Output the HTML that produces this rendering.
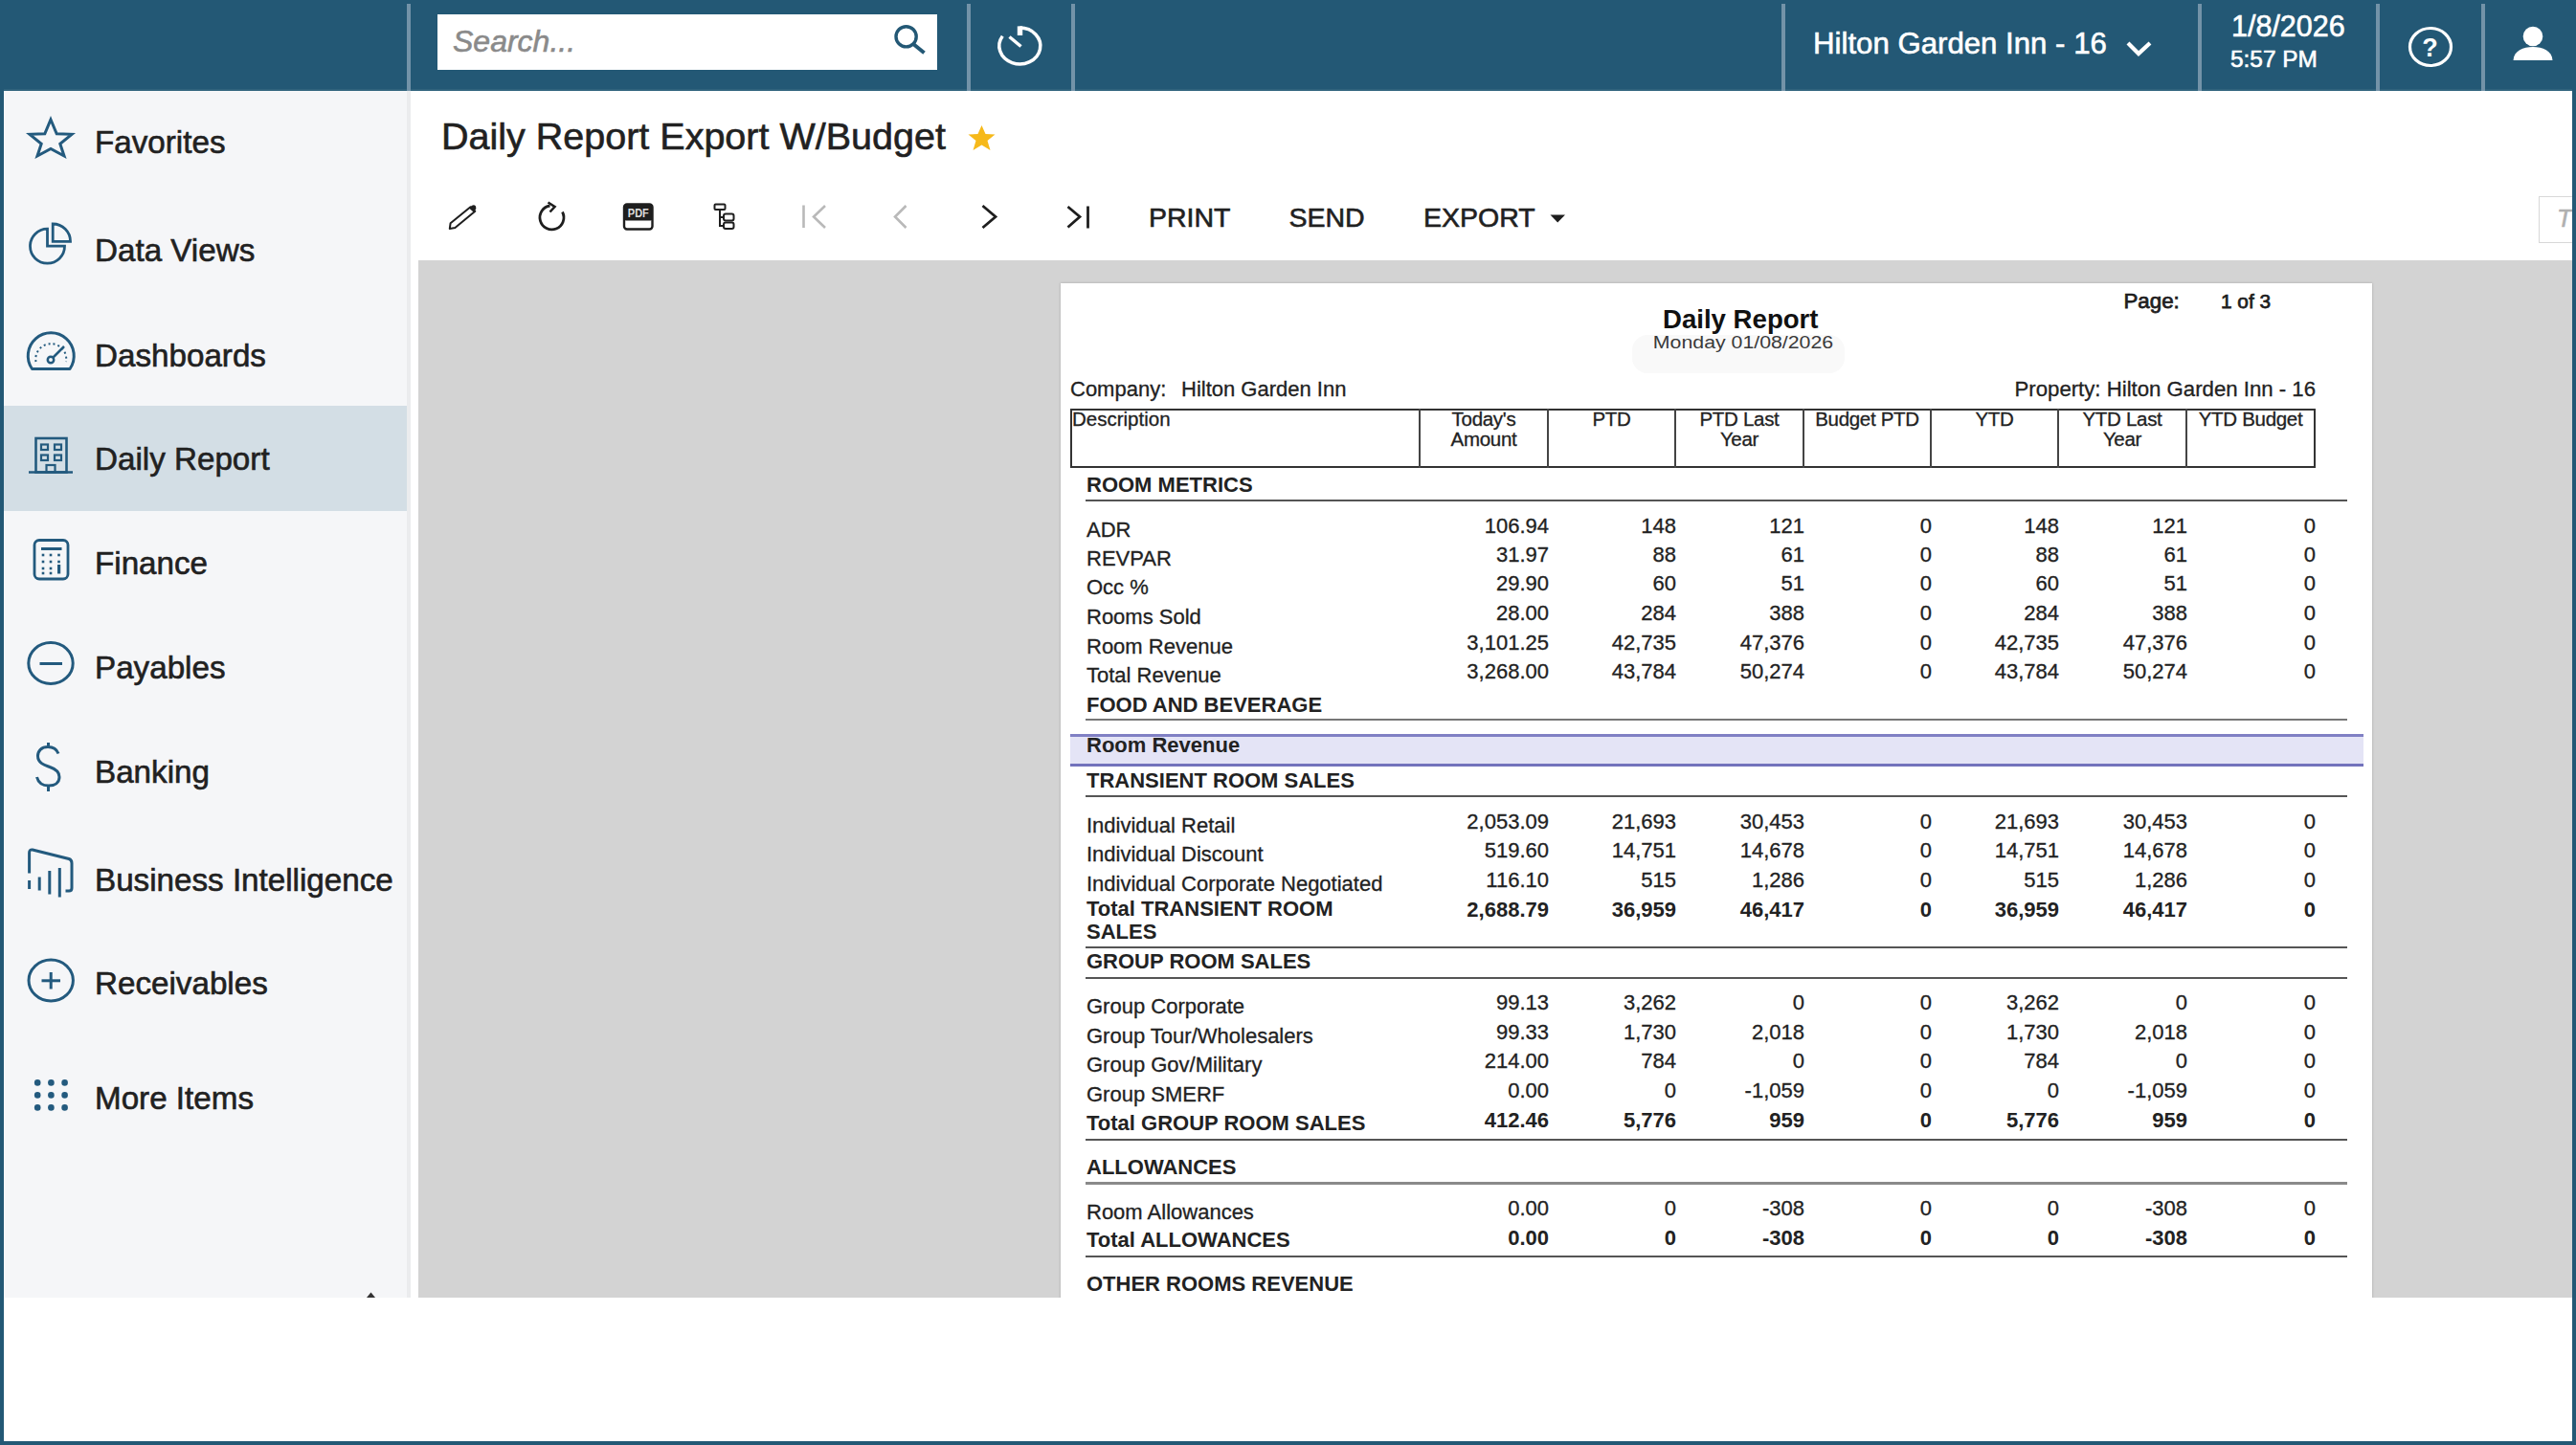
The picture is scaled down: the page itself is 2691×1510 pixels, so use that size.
<!DOCTYPE html>
<html><head><meta charset="utf-8"><title>Daily Report Export W/Budget</title>
<style>
html,body{margin:0;padding:0;}
body{width:2691px;height:1510px;position:relative;overflow:hidden;background:#235875;font-family:"Liberation Sans",sans-serif;}
.t{position:absolute;line-height:1;white-space:nowrap;-webkit-text-stroke:0.6px currentColor;}
.b{-webkit-text-stroke:0;}
.rp{-webkit-text-stroke:0.3px currentColor;}
.ns{-webkit-text-stroke:0;}
.r{position:absolute;}
svg{position:absolute;overflow:visible;}
</style></head><body>
<div class="r" style="left:4px;top:95px;width:2683px;height:1411px;background:#ffffff;"></div>
<div class="r" style="left:4px;top:93px;width:2683px;height:2px;background:#30637d;"></div>
<div class="r" style="left:4px;top:95px;width:421px;height:1261px;background:#f5f6f8;"></div>
<div class="r" style="left:425px;top:95px;width:4px;height:1261px;background:#ebecee;"></div>
<div class="r" style="left:4px;top:424px;width:421px;height:110px;background:#d3dee5;"></div>
<div class="r" style="left:437px;top:272px;width:2250px;height:1084px;background:#d3d3d3;"></div>
<div class="r" style="left:1108px;top:296px;width:1370px;height:1100px;background:#ffffff;box-shadow:0 0 2.5px rgba(0,0,0,0.22);"></div>
<div class="r" style="left:425px;top:4px;width:4px;height:91px;background:#7393a8;"></div>
<div class="r" style="left:1010px;top:4px;width:4px;height:91px;background:#7393a8;"></div>
<div class="r" style="left:1119px;top:4px;width:4px;height:91px;background:#7393a8;"></div>
<div class="r" style="left:1861px;top:4px;width:4px;height:91px;background:#7393a8;"></div>
<div class="r" style="left:2296px;top:4px;width:4px;height:91px;background:#7393a8;"></div>
<div class="r" style="left:2482px;top:4px;width:4px;height:91px;background:#7393a8;"></div>
<div class="r" style="left:2592px;top:4px;width:4px;height:91px;background:#7393a8;"></div>
<div class="r" style="left:457px;top:15px;width:522px;height:58px;background:#ffffff;"></div>
<div class="t" style="left:473.0px;top:26.9px;font-size:32px;color:#8a8a8a;font-style:italic;">Search...</div>
<svg style="left:0;top:0" width="1200" height="94"><circle cx="946.6" cy="38.3" r="10.6" fill="none" stroke="#235875" stroke-width="3.4"/><line x1="953.8" y1="45.8" x2="965.5" y2="55.2" stroke="#235875" stroke-width="4"/><path d="M 1047.3 37.7 A 21.5 18.9 0 1 0 1065.3 29.1" fill="none" stroke="#fff" stroke-width="3.5"/><rect x="1062.8" y="27.4" width="5.4" height="9.6" fill="#fff"/><line x1="1054.5" y1="38.5" x2="1066.5" y2="48.5" stroke="#fff" stroke-width="3.5"/></svg>
<div class="t" style="left:1894.0px;top:29.6px;font-size:31.2px;color:#ffffff;">Hilton Garden Inn - 16</div>
<svg style="left:2220px;top:42px" width="30" height="18" viewBox="0 0 30 18"><polyline points="3,3 14,14 26,3" fill="none" stroke="#fff" stroke-width="4.2"/></svg>
<div class="t" style="left:2331.0px;top:12.2px;font-size:30.5px;color:#ffffff;">1/8/2026</div>
<div class="t" style="left:2330.0px;top:50.3px;font-size:24.4px;color:#ffffff;">5:57 PM</div>
<svg style="left:2514px;top:27px" width="50" height="44" viewBox="0 0 50 44"><ellipse cx="25" cy="22" rx="21.5" ry="19.5" fill="none" stroke="#fff" stroke-width="3.2"/></svg>
<div class="t b" style="left:2523.5px;width:30px;text-align:center;top:36.6px;font-size:27px;color:#ffffff;font-weight:700;">?</div>
<svg style="left:2624px;top:26px" width="44" height="40" viewBox="0 0 44 40"><ellipse cx="22" cy="12" rx="10.3" ry="10.3" fill="#fff"/><path d="M1.5 37 C 2 27, 12 23, 22 23 C 32 23, 42 27, 42.5 37 Z" fill="#fff"/></svg>
<div class="t" style="left:99.0px;top:131.9px;font-size:33.2px;color:#212121;">Favorites</div>
<div class="t" style="left:99.0px;top:245.4px;font-size:33.2px;color:#212121;">Data Views</div>
<div class="t" style="left:99.0px;top:354.9px;font-size:33.2px;color:#212121;">Dashboards</div>
<div class="t" style="left:99.0px;top:463.4px;font-size:33.2px;color:#212121;">Daily Report</div>
<div class="t" style="left:99.0px;top:571.9px;font-size:33.2px;color:#212121;">Finance</div>
<div class="t" style="left:99.0px;top:681.4px;font-size:33.2px;color:#212121;">Payables</div>
<div class="t" style="left:99.0px;top:789.9px;font-size:33.2px;color:#212121;">Banking</div>
<div class="t" style="left:99.0px;top:902.9px;font-size:33.2px;color:#212121;">Business Intelligence</div>
<div class="t" style="left:99.0px;top:1010.9px;font-size:33.2px;color:#212121;">Receivables</div>
<div class="t" style="left:99.0px;top:1130.9px;font-size:33.2px;color:#212121;">More Items</div>
<svg style="left:0;top:0" width="100" height="1200"><polygon points="53,125 59.2,139.8 75,140.3 62.8,150.3 67,163 53,155.5 39,163 43.2,150.3 31,140.3 46.8,139.8" fill="none" stroke="#235a7e" stroke-width="3" stroke-linejoin="miter"/><path d="M 49.5 239.2 A 18 18 0 1 0 67.5 257.2 L 49.5 257.2 Z" fill="none" stroke="#235a7e" stroke-width="2.8"/><path d="M 55.2 234 A 18.3 18.3 0 0 1 73.5 252.3 L 55.2 252.3 Z" fill="none" stroke="#235a7e" stroke-width="2.8"/><path d="M 33.5 385.5 A 24 24 0 1 1 73 385.5 Z" fill="none" stroke="#235a7e" stroke-width="3" stroke-linejoin="round"/><path d="M 37.5 378 A 16 16 0 1 1 69 378" fill="none" stroke="#235a7e" stroke-width="2" stroke-dasharray="2 3"/><circle cx="53" cy="376" r="3.2" fill="none" stroke="#235a7e" stroke-width="2.5"/><line x1="55" y1="374" x2="67" y2="362" stroke="#235a7e" stroke-width="2.5"/><rect x="37.5" y="458" width="32" height="35.5" fill="none" stroke="#235a7e" stroke-width="2.6"/><line x1="30" y1="493.5" x2="76" y2="493.5" stroke="#235a7e" stroke-width="2.6"/><rect x="43" y="464.5" width="7" height="5.5" fill="none" stroke="#235a7e" stroke-width="2.2"/><rect x="57" y="464.5" width="7" height="5.5" fill="none" stroke="#235a7e" stroke-width="2.2"/><rect x="43" y="475.5" width="7" height="5.5" fill="none" stroke="#235a7e" stroke-width="2.2"/><rect x="57" y="475.5" width="7" height="5.5" fill="none" stroke="#235a7e" stroke-width="2.2"/><rect x="48.5" y="486" width="9" height="7.5" fill="none" stroke="#235a7e" stroke-width="2.2"/><rect x="36" y="564.5" width="35" height="40.5" rx="5" fill="none" stroke="#235a7e" stroke-width="2.8"/><line x1="43" y1="573.5" x2="64.5" y2="573.5" stroke="#235a7e" stroke-width="3"/><rect x="43.7" y="578.7" width="2.6" height="2.6" fill="#235a7e"/><rect x="43.7" y="585.7" width="2.6" height="2.6" fill="#235a7e"/><rect x="43.7" y="592.7" width="2.6" height="2.6" fill="#235a7e"/><rect x="43.7" y="597.7" width="2.6" height="2.6" fill="#235a7e"/><rect x="51.7" y="578.7" width="2.6" height="2.6" fill="#235a7e"/><rect x="51.7" y="585.7" width="2.6" height="2.6" fill="#235a7e"/><rect x="51.7" y="592.7" width="2.6" height="2.6" fill="#235a7e"/><rect x="51.7" y="597.7" width="2.6" height="2.6" fill="#235a7e"/><rect x="60.2" y="578.7" width="2.6" height="2.6" fill="#235a7e"/><rect x="60.2" y="585.7" width="2.6" height="2.6" fill="#235a7e"/><rect x="60" y="590" width="3.2" height="9.5" fill="#235a7e"/><ellipse cx="53" cy="693" rx="23.2" ry="21.5" fill="none" stroke="#235a7e" stroke-width="3"/><line x1="41.5" y1="693.5" x2="65" y2="693.5" stroke="#235a7e" stroke-width="3"/><path d="M 30.6 912.5 L 30.6 891 Q 30.6 887.5 34 888 L 72 897.5 Q 75 898.5 75 902 L 75 928 Q 75 931 72 931 L 68.5 931" fill="none" stroke="#235a7e" stroke-width="3"/><line x1="30.6" y1="920" x2="30.6" y2="929" stroke="#235a7e" stroke-width="3"/><line x1="41.2" y1="916.5" x2="41.2" y2="930.5" stroke="#235a7e" stroke-width="3"/><line x1="51.8" y1="910" x2="51.8" y2="934.5" stroke="#235a7e" stroke-width="3"/><line x1="62.3" y1="907" x2="62.3" y2="937.5" stroke="#235a7e" stroke-width="3"/><ellipse cx="53.2" cy="1024.5" rx="23.2" ry="21.5" fill="none" stroke="#235a7e" stroke-width="3"/><line x1="43.5" y1="1024.8" x2="63" y2="1024.8" stroke="#235a7e" stroke-width="3"/><line x1="53.2" y1="1016" x2="53.2" y2="1033.5" stroke="#235a7e" stroke-width="3"/><circle cx="39.2" cy="1131.4" r="3.3" fill="#235a7e"/><circle cx="39.2" cy="1144.4" r="3.3" fill="#235a7e"/><circle cx="39.2" cy="1157.4" r="3.3" fill="#235a7e"/><circle cx="53.4" cy="1131.4" r="3.3" fill="#235a7e"/><circle cx="53.4" cy="1144.4" r="3.3" fill="#235a7e"/><circle cx="53.4" cy="1157.4" r="3.3" fill="#235a7e"/><circle cx="67.6" cy="1131.4" r="3.3" fill="#235a7e"/><circle cx="67.6" cy="1144.4" r="3.3" fill="#235a7e"/><circle cx="67.6" cy="1157.4" r="3.3" fill="#235a7e"/></svg>
<svg style="left:0;top:0" width="100" height="900"><path d="M 61 787.5 C 59 782, 54 780.5, 50 780.5 C 43 780.5, 39.5 785, 39.5 790 C 39.5 798, 48 800, 52 801.5 C 58 803.5, 62 806, 62 812 C 62 818, 57 821, 51 821 C 45 821, 40 818, 38.5 812" fill="none" stroke="#235a7e" stroke-width="3"/><line x1="50.5" y1="776" x2="50.5" y2="781" stroke="#235a7e" stroke-width="3"/><line x1="50.5" y1="821" x2="50.5" y2="827" stroke="#235a7e" stroke-width="3"/></svg>
<div class="t" style="left:461.0px;top:122.6px;font-size:39.5px;color:#212121;">Daily Report Export W/Budget</div>
<svg style="left:1010px;top:130px" width="32" height="28" viewBox="0 0 32 28"><polygon points="15.5,1 19.5,10 29.5,10.5 21.5,17 24.5,27 15.5,21.5 6.5,27 9.5,17 1.5,10.5 11.5,10" fill="#f6b91a"/></svg>
<svg style="left:0;top:0" width="1700" height="300"><path d="M 469.8 239 L 470.6 233.2 L 491.5 216.2 L 496.3 220.8 L 475.4 238 Z" fill="none" stroke="#1e1e1e" stroke-width="2" stroke-linejoin="round"/><path d="M 490 217.5 L 493 214.8 Q 495.5 213.5 497 215.5 Q 498 217.8 496.3 219.5 L 494.5 221.5 Z" fill="#1e1e1e"/><path d="M 574.5 215 A 12.5 12.5 0 1 0 587.5 221.5" fill="none" stroke="#1e1e1e" stroke-width="2.8"/><polyline points="572.5,211.5 579.5,216 574.5,221.5" fill="none" stroke="#1e1e1e" stroke-width="2.6"/><rect x="652" y="213.5" width="29.5" height="26" rx="3" fill="none" stroke="#1e1e1e" stroke-width="2.4"/><rect x="652" y="213.5" width="29.5" height="17" rx="2" fill="#1e1e1e"/><text x="666.8" y="227" font-family="Liberation Sans" font-size="12" font-weight="700" fill="#ddd" text-anchor="middle" textLength="22" lengthAdjust="spacingAndGlyphs">PDF</text><rect x="746.5" y="213.5" width="11" height="5.5" rx="1" fill="none" stroke="#1e1e1e" stroke-width="2"/><path d="M 752 219 L 752 236 L 756 236 M 752 227 L 756 227" fill="none" stroke="#1e1e1e" stroke-width="2"/><rect x="756" y="223.5" width="10.5" height="7" rx="2" fill="none" stroke="#1e1e1e" stroke-width="2"/><rect x="756" y="232.5" width="10.5" height="6.5" rx="2" fill="none" stroke="#1e1e1e" stroke-width="2"/><path d="M 839.5 214.5 L 839.5 238" stroke="#b9b9b9" stroke-width="2.6"/><polyline points="862,215 850,226.5 862,238" fill="none" stroke="#b9b9b9" stroke-width="2.6"/><polyline points="946.5,215 935,226.5 946.5,238" fill="none" stroke="#b9b9b9" stroke-width="2.6"/><polyline points="1026.5,215 1040,226.5 1026.5,238" fill="none" stroke="#1e1e1e" stroke-width="2.8"/><polyline points="1115.5,216 1128,226.5 1115.5,237.5" fill="none" stroke="#1e1e1e" stroke-width="2.8"/><line x1="1136.5" y1="215.5" x2="1136.5" y2="238.5" stroke="#1e1e1e" stroke-width="2.8"/><polygon points="1619.5,224.5 1635,224.5 1627.2,232.5" fill="#1e1e1e"/></svg>
<div class="t" style="left:1200.0px;top:212.9px;font-size:28.5px;color:#212121;">PRINT</div>
<div class="t" style="left:1346.5px;top:212.9px;font-size:28.5px;color:#212121;">SEND</div>
<div class="t" style="left:1487.0px;top:212.9px;font-size:28.5px;color:#212121;">EXPORT</div>
<div class="r" style="left:2652px;top:205px;width:35px;height:49px;background:#ffffff;border:1.5px solid #d8d8d8;border-right:0;box-sizing:border-box;overflow:hidden;"></div>
<div class="t" style="left:2671.0px;top:215.0px;font-size:26px;color:#b0b0b0;font-style:italic;">T</div>
<div class="r" style="left:2687px;top:94px;width:4px;height:1416px;background:#235875;"></div>
<div class="t b" style="left:1737.0px;top:319.6px;font-size:27.6px;color:#111;font-weight:700;">Daily Report</div>
<div class="r" style="left:1705px;top:350px;width:222px;height:40px;background:#f9f9f9;border-radius:16px;"></div>
<div class="t" style="left:1691.0px;width:260px;text-align:center;top:348.4px;font-size:19.2px;color:#3a3a3a;transform:scaleX(1.11);-webkit-text-stroke:0;">Monday 01/08/2026</div>
<div class="t" style="left:2218.5px;top:304.1px;font-size:22.3px;color:#1e1e1e;-webkit-text-stroke:0.75px #1e1e1e;">Page:</div>
<div class="t" style="left:2320.0px;top:305.4px;font-size:20.8px;color:#1e1e1e;-webkit-text-stroke:0.75px #1e1e1e;">1 of 3</div>
<div class="t rp" style="left:1118.0px;top:395.9px;font-size:22px;color:#222222;">Company:</div>
<div class="t rp" style="left:1234.0px;top:395.9px;font-size:22px;color:#222222;">Hilton Garden Inn</div>
<div class="t rp" style="left:2019.0px;width:400px;text-align:right;top:395.5px;font-size:22.2px;color:#222222;">Property: Hilton Garden Inn - 16</div>
<div class="r" style="left:1118px;top:427px;width:1301px;height:62px;background:transparent;border:2px solid #333;box-sizing:border-box;"></div>
<div class="r" style="left:1482px;top:427px;width:2px;height:62px;background:#444;"></div>
<div class="r" style="left:1616px;top:427px;width:2px;height:62px;background:#444;"></div>
<div class="r" style="left:1749px;top:427px;width:2px;height:62px;background:#444;"></div>
<div class="r" style="left:1883px;top:427px;width:2px;height:62px;background:#444;"></div>
<div class="r" style="left:2016px;top:427px;width:2px;height:62px;background:#444;"></div>
<div class="r" style="left:2149px;top:427px;width:2px;height:62px;background:#444;"></div>
<div class="r" style="left:2283px;top:427px;width:2px;height:62px;background:#444;"></div>
<div class="t rp" style="left:1120.0px;top:427.9px;font-size:20.5px;color:#222222;">Description</div>
<div class="t rp" style="left:1483.0px;width:134px;text-align:center;top:427.9px;font-size:20.5px;color:#222222;letter-spacing:-0.3px;">Today's</div>
<div class="t rp" style="left:1483.0px;width:134px;text-align:center;top:449.1px;font-size:20.5px;color:#222222;letter-spacing:-0.3px;">Amount</div>
<div class="t rp" style="left:1616.5px;width:134px;text-align:center;top:427.9px;font-size:20.5px;color:#222222;letter-spacing:-0.3px;">PTD</div>
<div class="t rp" style="left:1750.0px;width:134px;text-align:center;top:427.9px;font-size:20.5px;color:#222222;letter-spacing:-0.3px;">PTD Last</div>
<div class="t rp" style="left:1750.0px;width:134px;text-align:center;top:449.1px;font-size:20.5px;color:#222222;letter-spacing:-0.3px;">Year</div>
<div class="t rp" style="left:1883.5px;width:134px;text-align:center;top:427.9px;font-size:20.5px;color:#222222;letter-spacing:-0.3px;">Budget PTD</div>
<div class="t rp" style="left:2016.5px;width:134px;text-align:center;top:427.9px;font-size:20.5px;color:#222222;letter-spacing:-0.3px;">YTD</div>
<div class="t rp" style="left:2150.0px;width:134px;text-align:center;top:427.9px;font-size:20.5px;color:#222222;letter-spacing:-0.3px;">YTD Last</div>
<div class="t rp" style="left:2150.0px;width:134px;text-align:center;top:449.1px;font-size:20.5px;color:#222222;letter-spacing:-0.3px;">Year</div>
<div class="t rp" style="left:2284.0px;width:134px;text-align:center;top:427.9px;font-size:20.5px;color:#222222;letter-spacing:-0.3px;">YTD Budget</div>
<div class="t b" style="left:1135.0px;top:496.4px;font-size:22px;color:#222222;font-weight:700;">ROOM METRICS</div>
<div class="r" style="left:1134px;top:522px;width:1318px;height:2px;background:#555;"></div>
<div class="t rp" style="left:1135.0px;top:542.8px;font-size:22px;color:#222222;">ADR</div>
<div class="t rp" style="left:1488.0px;width:130px;text-align:right;top:538.8px;font-size:22px;color:#222222;">106.94</div>
<div class="t rp" style="left:1621.0px;width:130px;text-align:right;top:538.8px;font-size:22px;color:#222222;">148</div>
<div class="t rp" style="left:1755.0px;width:130px;text-align:right;top:538.8px;font-size:22px;color:#222222;">121</div>
<div class="t rp" style="left:1888.0px;width:130px;text-align:right;top:538.8px;font-size:22px;color:#222222;">0</div>
<div class="t rp" style="left:2021.0px;width:130px;text-align:right;top:538.8px;font-size:22px;color:#222222;">148</div>
<div class="t rp" style="left:2155.0px;width:130px;text-align:right;top:538.8px;font-size:22px;color:#222222;">121</div>
<div class="t rp" style="left:2289.0px;width:130px;text-align:right;top:538.8px;font-size:22px;color:#222222;">0</div>
<div class="t rp" style="left:1135.0px;top:573.4px;font-size:22px;color:#222222;">REVPAR</div>
<div class="t rp" style="left:1488.0px;width:130px;text-align:right;top:569.4px;font-size:22px;color:#222222;">31.97</div>
<div class="t rp" style="left:1621.0px;width:130px;text-align:right;top:569.4px;font-size:22px;color:#222222;">88</div>
<div class="t rp" style="left:1755.0px;width:130px;text-align:right;top:569.4px;font-size:22px;color:#222222;">61</div>
<div class="t rp" style="left:1888.0px;width:130px;text-align:right;top:569.4px;font-size:22px;color:#222222;">0</div>
<div class="t rp" style="left:2021.0px;width:130px;text-align:right;top:569.4px;font-size:22px;color:#222222;">88</div>
<div class="t rp" style="left:2155.0px;width:130px;text-align:right;top:569.4px;font-size:22px;color:#222222;">61</div>
<div class="t rp" style="left:2289.0px;width:130px;text-align:right;top:569.4px;font-size:22px;color:#222222;">0</div>
<div class="t rp" style="left:1135.0px;top:603.4px;font-size:22px;color:#222222;">Occ %</div>
<div class="t rp" style="left:1488.0px;width:130px;text-align:right;top:599.4px;font-size:22px;color:#222222;">29.90</div>
<div class="t rp" style="left:1621.0px;width:130px;text-align:right;top:599.4px;font-size:22px;color:#222222;">60</div>
<div class="t rp" style="left:1755.0px;width:130px;text-align:right;top:599.4px;font-size:22px;color:#222222;">51</div>
<div class="t rp" style="left:1888.0px;width:130px;text-align:right;top:599.4px;font-size:22px;color:#222222;">0</div>
<div class="t rp" style="left:2021.0px;width:130px;text-align:right;top:599.4px;font-size:22px;color:#222222;">60</div>
<div class="t rp" style="left:2155.0px;width:130px;text-align:right;top:599.4px;font-size:22px;color:#222222;">51</div>
<div class="t rp" style="left:2289.0px;width:130px;text-align:right;top:599.4px;font-size:22px;color:#222222;">0</div>
<div class="t rp" style="left:1135.0px;top:634.4px;font-size:22px;color:#222222;">Rooms Sold</div>
<div class="t rp" style="left:1488.0px;width:130px;text-align:right;top:630.4px;font-size:22px;color:#222222;">28.00</div>
<div class="t rp" style="left:1621.0px;width:130px;text-align:right;top:630.4px;font-size:22px;color:#222222;">284</div>
<div class="t rp" style="left:1755.0px;width:130px;text-align:right;top:630.4px;font-size:22px;color:#222222;">388</div>
<div class="t rp" style="left:1888.0px;width:130px;text-align:right;top:630.4px;font-size:22px;color:#222222;">0</div>
<div class="t rp" style="left:2021.0px;width:130px;text-align:right;top:630.4px;font-size:22px;color:#222222;">284</div>
<div class="t rp" style="left:2155.0px;width:130px;text-align:right;top:630.4px;font-size:22px;color:#222222;">388</div>
<div class="t rp" style="left:2289.0px;width:130px;text-align:right;top:630.4px;font-size:22px;color:#222222;">0</div>
<div class="t rp" style="left:1135.0px;top:665.4px;font-size:22px;color:#222222;">Room Revenue</div>
<div class="t rp" style="left:1488.0px;width:130px;text-align:right;top:661.4px;font-size:22px;color:#222222;">3,101.25</div>
<div class="t rp" style="left:1621.0px;width:130px;text-align:right;top:661.4px;font-size:22px;color:#222222;">42,735</div>
<div class="t rp" style="left:1755.0px;width:130px;text-align:right;top:661.4px;font-size:22px;color:#222222;">47,376</div>
<div class="t rp" style="left:1888.0px;width:130px;text-align:right;top:661.4px;font-size:22px;color:#222222;">0</div>
<div class="t rp" style="left:2021.0px;width:130px;text-align:right;top:661.4px;font-size:22px;color:#222222;">42,735</div>
<div class="t rp" style="left:2155.0px;width:130px;text-align:right;top:661.4px;font-size:22px;color:#222222;">47,376</div>
<div class="t rp" style="left:2289.0px;width:130px;text-align:right;top:661.4px;font-size:22px;color:#222222;">0</div>
<div class="t rp" style="left:1135.0px;top:695.4px;font-size:22px;color:#222222;">Total Revenue</div>
<div class="t rp" style="left:1488.0px;width:130px;text-align:right;top:691.4px;font-size:22px;color:#222222;">3,268.00</div>
<div class="t rp" style="left:1621.0px;width:130px;text-align:right;top:691.4px;font-size:22px;color:#222222;">43,784</div>
<div class="t rp" style="left:1755.0px;width:130px;text-align:right;top:691.4px;font-size:22px;color:#222222;">50,274</div>
<div class="t rp" style="left:1888.0px;width:130px;text-align:right;top:691.4px;font-size:22px;color:#222222;">0</div>
<div class="t rp" style="left:2021.0px;width:130px;text-align:right;top:691.4px;font-size:22px;color:#222222;">43,784</div>
<div class="t rp" style="left:2155.0px;width:130px;text-align:right;top:691.4px;font-size:22px;color:#222222;">50,274</div>
<div class="t rp" style="left:2289.0px;width:130px;text-align:right;top:691.4px;font-size:22px;color:#222222;">0</div>
<div class="t b" style="left:1135.0px;top:725.5px;font-size:22px;color:#222222;font-weight:700;">FOOD AND BEVERAGE</div>
<div class="r" style="left:1134px;top:751px;width:1318px;height:2px;background:#777;"></div>
<div class="r" style="left:1118px;top:766.5px;width:1351px;height:3px;background:#8080c4;"></div>
<div class="r" style="left:1118px;top:769.5px;width:1351px;height:29px;background:#e4e4f6;"></div>
<div class="r" style="left:1118px;top:798px;width:1351px;height:3px;background:#7272bc;"></div>
<div class="t b" style="left:1135.0px;top:768.4px;font-size:22px;color:#222222;font-weight:700;">Room Revenue</div>
<div class="t b" style="left:1135.0px;top:805.3px;font-size:22px;color:#222222;font-weight:700;">TRANSIENT ROOM SALES</div>
<div class="r" style="left:1134px;top:831px;width:1318px;height:2px;background:#555;"></div>
<div class="t rp" style="left:1135.0px;top:852.0px;font-size:22px;color:#222222;">Individual Retail</div>
<div class="t rp" style="left:1488.0px;width:130px;text-align:right;top:848.0px;font-size:22px;color:#222222;">2,053.09</div>
<div class="t rp" style="left:1621.0px;width:130px;text-align:right;top:848.0px;font-size:22px;color:#222222;">21,693</div>
<div class="t rp" style="left:1755.0px;width:130px;text-align:right;top:848.0px;font-size:22px;color:#222222;">30,453</div>
<div class="t rp" style="left:1888.0px;width:130px;text-align:right;top:848.0px;font-size:22px;color:#222222;">0</div>
<div class="t rp" style="left:2021.0px;width:130px;text-align:right;top:848.0px;font-size:22px;color:#222222;">21,693</div>
<div class="t rp" style="left:2155.0px;width:130px;text-align:right;top:848.0px;font-size:22px;color:#222222;">30,453</div>
<div class="t rp" style="left:2289.0px;width:130px;text-align:right;top:848.0px;font-size:22px;color:#222222;">0</div>
<div class="t rp" style="left:1135.0px;top:882.4px;font-size:22px;color:#222222;">Individual Discount</div>
<div class="t rp" style="left:1488.0px;width:130px;text-align:right;top:878.4px;font-size:22px;color:#222222;">519.60</div>
<div class="t rp" style="left:1621.0px;width:130px;text-align:right;top:878.4px;font-size:22px;color:#222222;">14,751</div>
<div class="t rp" style="left:1755.0px;width:130px;text-align:right;top:878.4px;font-size:22px;color:#222222;">14,678</div>
<div class="t rp" style="left:1888.0px;width:130px;text-align:right;top:878.4px;font-size:22px;color:#222222;">0</div>
<div class="t rp" style="left:2021.0px;width:130px;text-align:right;top:878.4px;font-size:22px;color:#222222;">14,751</div>
<div class="t rp" style="left:2155.0px;width:130px;text-align:right;top:878.4px;font-size:22px;color:#222222;">14,678</div>
<div class="t rp" style="left:2289.0px;width:130px;text-align:right;top:878.4px;font-size:22px;color:#222222;">0</div>
<div class="t rp" style="left:1135.0px;top:913.1px;font-size:22px;color:#222222;">Individual Corporate Negotiated</div>
<div class="t rp" style="left:1488.0px;width:130px;text-align:right;top:909.1px;font-size:22px;color:#222222;">116.10</div>
<div class="t rp" style="left:1621.0px;width:130px;text-align:right;top:909.1px;font-size:22px;color:#222222;">515</div>
<div class="t rp" style="left:1755.0px;width:130px;text-align:right;top:909.1px;font-size:22px;color:#222222;">1,286</div>
<div class="t rp" style="left:1888.0px;width:130px;text-align:right;top:909.1px;font-size:22px;color:#222222;">0</div>
<div class="t rp" style="left:2021.0px;width:130px;text-align:right;top:909.1px;font-size:22px;color:#222222;">515</div>
<div class="t rp" style="left:2155.0px;width:130px;text-align:right;top:909.1px;font-size:22px;color:#222222;">1,286</div>
<div class="t rp" style="left:2289.0px;width:130px;text-align:right;top:909.1px;font-size:22px;color:#222222;">0</div>
<div class="t b" style="left:1135.0px;top:939.4px;font-size:22px;color:#222222;font-weight:700;">Total TRANSIENT ROOM</div>
<div class="t b" style="left:1488.0px;width:130px;text-align:right;top:939.9px;font-size:22px;color:#222222;font-weight:700;">2,688.79</div>
<div class="t b" style="left:1621.0px;width:130px;text-align:right;top:939.9px;font-size:22px;color:#222222;font-weight:700;">36,959</div>
<div class="t b" style="left:1755.0px;width:130px;text-align:right;top:939.9px;font-size:22px;color:#222222;font-weight:700;">46,417</div>
<div class="t b" style="left:1888.0px;width:130px;text-align:right;top:939.9px;font-size:22px;color:#222222;font-weight:700;">0</div>
<div class="t b" style="left:2021.0px;width:130px;text-align:right;top:939.9px;font-size:22px;color:#222222;font-weight:700;">36,959</div>
<div class="t b" style="left:2155.0px;width:130px;text-align:right;top:939.9px;font-size:22px;color:#222222;font-weight:700;">46,417</div>
<div class="t b" style="left:2289.0px;width:130px;text-align:right;top:939.9px;font-size:22px;color:#222222;font-weight:700;">0</div>
<div class="t b" style="left:1135.0px;top:963.4px;font-size:22px;color:#222222;font-weight:700;">SALES</div>
<div class="r" style="left:1134px;top:989px;width:1318px;height:2px;background:#555;"></div>
<div class="t b" style="left:1135.0px;top:994.4px;font-size:22px;color:#222222;font-weight:700;">GROUP ROOM SALES</div>
<div class="r" style="left:1134px;top:1021px;width:1318px;height:2px;background:#555;"></div>
<div class="t rp" style="left:1135.0px;top:1041.3px;font-size:22px;color:#222222;">Group Corporate</div>
<div class="t rp" style="left:1488.0px;width:130px;text-align:right;top:1037.3px;font-size:22px;color:#222222;">99.13</div>
<div class="t rp" style="left:1621.0px;width:130px;text-align:right;top:1037.3px;font-size:22px;color:#222222;">3,262</div>
<div class="t rp" style="left:1755.0px;width:130px;text-align:right;top:1037.3px;font-size:22px;color:#222222;">0</div>
<div class="t rp" style="left:1888.0px;width:130px;text-align:right;top:1037.3px;font-size:22px;color:#222222;">0</div>
<div class="t rp" style="left:2021.0px;width:130px;text-align:right;top:1037.3px;font-size:22px;color:#222222;">3,262</div>
<div class="t rp" style="left:2155.0px;width:130px;text-align:right;top:1037.3px;font-size:22px;color:#222222;">0</div>
<div class="t rp" style="left:2289.0px;width:130px;text-align:right;top:1037.3px;font-size:22px;color:#222222;">0</div>
<div class="t rp" style="left:1135.0px;top:1071.7px;font-size:22px;color:#222222;">Group Tour/Wholesalers</div>
<div class="t rp" style="left:1488.0px;width:130px;text-align:right;top:1067.7px;font-size:22px;color:#222222;">99.33</div>
<div class="t rp" style="left:1621.0px;width:130px;text-align:right;top:1067.7px;font-size:22px;color:#222222;">1,730</div>
<div class="t rp" style="left:1755.0px;width:130px;text-align:right;top:1067.7px;font-size:22px;color:#222222;">2,018</div>
<div class="t rp" style="left:1888.0px;width:130px;text-align:right;top:1067.7px;font-size:22px;color:#222222;">0</div>
<div class="t rp" style="left:2021.0px;width:130px;text-align:right;top:1067.7px;font-size:22px;color:#222222;">1,730</div>
<div class="t rp" style="left:2155.0px;width:130px;text-align:right;top:1067.7px;font-size:22px;color:#222222;">2,018</div>
<div class="t rp" style="left:2289.0px;width:130px;text-align:right;top:1067.7px;font-size:22px;color:#222222;">0</div>
<div class="t rp" style="left:1135.0px;top:1102.4px;font-size:22px;color:#222222;">Group Gov/Military</div>
<div class="t rp" style="left:1488.0px;width:130px;text-align:right;top:1098.4px;font-size:22px;color:#222222;">214.00</div>
<div class="t rp" style="left:1621.0px;width:130px;text-align:right;top:1098.4px;font-size:22px;color:#222222;">784</div>
<div class="t rp" style="left:1755.0px;width:130px;text-align:right;top:1098.4px;font-size:22px;color:#222222;">0</div>
<div class="t rp" style="left:1888.0px;width:130px;text-align:right;top:1098.4px;font-size:22px;color:#222222;">0</div>
<div class="t rp" style="left:2021.0px;width:130px;text-align:right;top:1098.4px;font-size:22px;color:#222222;">784</div>
<div class="t rp" style="left:2155.0px;width:130px;text-align:right;top:1098.4px;font-size:22px;color:#222222;">0</div>
<div class="t rp" style="left:2289.0px;width:130px;text-align:right;top:1098.4px;font-size:22px;color:#222222;">0</div>
<div class="t rp" style="left:1135.0px;top:1132.8px;font-size:22px;color:#222222;">Group SMERF</div>
<div class="t rp" style="left:1488.0px;width:130px;text-align:right;top:1128.8px;font-size:22px;color:#222222;">0.00</div>
<div class="t rp" style="left:1621.0px;width:130px;text-align:right;top:1128.8px;font-size:22px;color:#222222;">0</div>
<div class="t rp" style="left:1755.0px;width:130px;text-align:right;top:1128.8px;font-size:22px;color:#222222;">-1,059</div>
<div class="t rp" style="left:1888.0px;width:130px;text-align:right;top:1128.8px;font-size:22px;color:#222222;">0</div>
<div class="t rp" style="left:2021.0px;width:130px;text-align:right;top:1128.8px;font-size:22px;color:#222222;">0</div>
<div class="t rp" style="left:2155.0px;width:130px;text-align:right;top:1128.8px;font-size:22px;color:#222222;">-1,059</div>
<div class="t rp" style="left:2289.0px;width:130px;text-align:right;top:1128.8px;font-size:22px;color:#222222;">0</div>
<div class="t b" style="left:1135.0px;top:1163.4px;font-size:22px;color:#222222;font-weight:700;">Total GROUP ROOM SALES</div>
<div class="t b" style="left:1488.0px;width:130px;text-align:right;top:1160.0px;font-size:22px;color:#222222;font-weight:700;">412.46</div>
<div class="t b" style="left:1621.0px;width:130px;text-align:right;top:1160.0px;font-size:22px;color:#222222;font-weight:700;">5,776</div>
<div class="t b" style="left:1755.0px;width:130px;text-align:right;top:1160.0px;font-size:22px;color:#222222;font-weight:700;">959</div>
<div class="t b" style="left:1888.0px;width:130px;text-align:right;top:1160.0px;font-size:22px;color:#222222;font-weight:700;">0</div>
<div class="t b" style="left:2021.0px;width:130px;text-align:right;top:1160.0px;font-size:22px;color:#222222;font-weight:700;">5,776</div>
<div class="t b" style="left:2155.0px;width:130px;text-align:right;top:1160.0px;font-size:22px;color:#222222;font-weight:700;">959</div>
<div class="t b" style="left:2289.0px;width:130px;text-align:right;top:1160.0px;font-size:22px;color:#222222;font-weight:700;">0</div>
<div class="r" style="left:1134px;top:1190px;width:1318px;height:2px;background:#555;"></div>
<div class="t b" style="left:1135.0px;top:1209.4px;font-size:22px;color:#222222;font-weight:700;">ALLOWANCES</div>
<div class="r" style="left:1134px;top:1235px;width:1318px;height:3px;background:#8a8a8a;"></div>
<div class="t rp" style="left:1135.0px;top:1255.7px;font-size:22px;color:#222222;">Room Allowances</div>
<div class="t rp" style="left:1488.0px;width:130px;text-align:right;top:1251.7px;font-size:22px;color:#222222;">0.00</div>
<div class="t rp" style="left:1621.0px;width:130px;text-align:right;top:1251.7px;font-size:22px;color:#222222;">0</div>
<div class="t rp" style="left:1755.0px;width:130px;text-align:right;top:1251.7px;font-size:22px;color:#222222;">-308</div>
<div class="t rp" style="left:1888.0px;width:130px;text-align:right;top:1251.7px;font-size:22px;color:#222222;">0</div>
<div class="t rp" style="left:2021.0px;width:130px;text-align:right;top:1251.7px;font-size:22px;color:#222222;">0</div>
<div class="t rp" style="left:2155.0px;width:130px;text-align:right;top:1251.7px;font-size:22px;color:#222222;">-308</div>
<div class="t rp" style="left:2289.0px;width:130px;text-align:right;top:1251.7px;font-size:22px;color:#222222;">0</div>
<div class="t b" style="left:1135.0px;top:1285.4px;font-size:22px;color:#222222;font-weight:700;">Total ALLOWANCES</div>
<div class="t b" style="left:1488.0px;width:130px;text-align:right;top:1282.8px;font-size:22px;color:#222222;font-weight:700;">0.00</div>
<div class="t b" style="left:1621.0px;width:130px;text-align:right;top:1282.8px;font-size:22px;color:#222222;font-weight:700;">0</div>
<div class="t b" style="left:1755.0px;width:130px;text-align:right;top:1282.8px;font-size:22px;color:#222222;font-weight:700;">-308</div>
<div class="t b" style="left:1888.0px;width:130px;text-align:right;top:1282.8px;font-size:22px;color:#222222;font-weight:700;">0</div>
<div class="t b" style="left:2021.0px;width:130px;text-align:right;top:1282.8px;font-size:22px;color:#222222;font-weight:700;">0</div>
<div class="t b" style="left:2155.0px;width:130px;text-align:right;top:1282.8px;font-size:22px;color:#222222;font-weight:700;">-308</div>
<div class="t b" style="left:2289.0px;width:130px;text-align:right;top:1282.8px;font-size:22px;color:#222222;font-weight:700;">0</div>
<div class="r" style="left:1134px;top:1312px;width:1318px;height:2px;background:#555;"></div>
<div class="t b" style="left:1135.0px;top:1331.2px;font-size:22px;color:#222222;font-weight:700;">OTHER ROOMS REVENUE</div>
<div class="r" style="left:4px;top:1356px;width:2683px;height:150px;background:#ffffff;"></div>
<svg style="left:0;top:0" width="500" height="1400"><polygon points="383,1356 387.5,1350.5 392,1356" fill="#333"/></svg>
</body></html>
